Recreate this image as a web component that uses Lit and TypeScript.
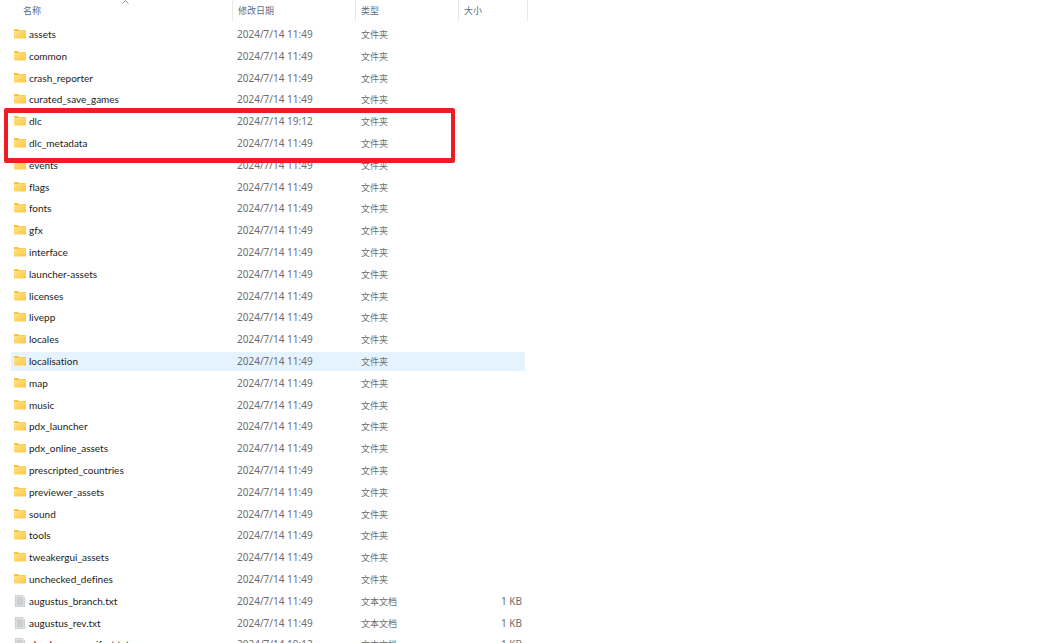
import { LitElement, html, css, svg } from "lit";
import { customElement, property, state } from "lit/decorators.js";

type Kind = "folder" | "text";

interface Entry {
  name: string;
  kind: Kind;
  modified: string;
  size?: string;
}

const DEFAULT_DATE = "2024/7/14 11:49";

const folder = (name: string, modified = DEFAULT_DATE): Entry => ({ name, kind: "folder", modified });
const text = (name: string, size: string, modified = DEFAULT_DATE): Entry => ({ name, kind: "text", modified, size });

const ENTRIES: Entry[] = [
  folder("assets"),
  folder("common"),
  folder("crash_reporter"),
  folder("curated_save_games"),
  folder("dlc", "2024/7/14 19:12"),
  folder("dlc_metadata"),
  folder("events"),
  folder("flags"),
  folder("fonts"),
  folder("gfx"),
  folder("interface"),
  folder("launcher-assets"),
  folder("licenses"),
  folder("livepp"),
  folder("locales"),
  folder("localisation"),
  folder("map"),
  folder("music"),
  folder("pdx_launcher"),
  folder("pdx_online_assets"),
  folder("prescripted_countries"),
  folder("previewer_assets"),
  folder("sound"),
  folder("tools"),
  folder("tweakergui_assets"),
  folder("unchecked_defines"),
  text("augustus_branch.txt", "1 KB"),
  text("augustus_rev.txt", "1 KB"),
  text("checksum_manifest.txt", "1 KB", "2024/7/14 19:12"),
];

const KIND_LABEL: Record<Kind, string> = { folder: "文件夹", text: "文本文档" };

@customElement("file-icon")
export class FileIcon extends LitElement {
  @property() kind: Kind = "folder";

  static styles = css`
    :host {
      display: block;
      width: 12px;
      height: 12px;
      flex: none;
    }
    .glyph {
      display: block;
      width: 12px;
      height: 12px;
    }
  `;

  render() {
    const shape =
      this.kind === "folder"
        ? svg`
            <defs>
              <linearGradient id="front" x1="0" y1="0" x2="1" y2="1">
                <stop offset="0" stop-color="#ffe28c"></stop>
                <stop offset="1" stop-color="#fcc840"></stop>
              </linearGradient>
            </defs>
            <path d="M0 1.7Q0 1 .7 1H3.8L4.8 2H11.3Q12 2 12 2.7V6H0Z" fill="#f9c22e"></path>
            <path d="M0 3.1H4L5 2.5H11.4Q12 2.5 12 3.1V9.8Q12 10.4 11.4 10.4H.6Q0 10.4 0 9.8Z" fill="url(#front)"></path>`
        : svg`
            <path d="M1.4.4H8.3L10.6 2.7V11.6H1.4Z" fill="#e9eaea" stroke="#bdbfc0" stroke-width=".7"></path>
            <path d="M2.6 1.8H7.6V3.3H9.5V10.6H2.6Z" fill="#cccecf"></path>
            <path d="M8.3.4V2.7H10.6" fill="#fff" stroke="#bdbfc0" stroke-width=".5"></path>`;
    return html`<svg class="glyph" viewBox="0 0 12 12" aria-hidden="true">${shape}</svg>`;
  }
}

@customElement("app-root")
export class AppRoot extends LitElement {
  @state() private hovered = "localisation";

  static styles = css`
    :host {
      display: block;
      height: 100vh;
      overflow: hidden;
      background: #fff;
      color: #6d6d6d;
      font-family: "Noto Sans", "Noto Sans CJK SC", sans-serif;
      font-size: 10px;
      font-variant-ligatures: none;
      line-height: 16px;
    }
    .pane {
      position: relative;
    }
    .files {
      table-layout: fixed;
      width: 528px;
      border-collapse: separate;
      border-spacing: 0;
    }
    .col-name {
      width: 233px;
    }
    .col-date {
      width: 123px;
    }
    .col-type {
      width: 103px;
    }
    .col-size {
      width: 69px;
    }
    .head {
      position: relative;
      height: 24px;
      padding: 0;
      vertical-align: top;
      text-align: left;
      font-weight: 400;
    }
    .sort {
      display: block;
      box-sizing: border-box;
      width: 100%;
      height: 21px;
      margin: 0;
      padding: 0 0 0 5px;
      border: 0;
      border-right: 1px solid #e8e8e8;
      background: none;
      color: #5a6d86;
      font: inherit;
      font-size: 9px;
      text-align: left;
    }
    .sort.first {
      padding-left: 23px;
    }
    .caret {
      position: absolute;
      top: 0;
      left: 122px;
      width: 7px;
      height: 4px;
    }
    .cell {
      box-sizing: border-box;
      height: 22px;
      padding: 0 0 2px 4px;
      border: 0 solid transparent;
      border-top-width: 1px;
      border-bottom-width: 2px;
      background-clip: padding-box;
      white-space: nowrap;
    }
    .row:nth-child(5n + 3) .cell {
      height: 21px;
      border-bottom-width: 1px;
    }
    .cell.name {
      border-left-width: 11px;
      padding-left: 3px;
      color: #1b1b1b;
      font-family: Lato, sans-serif;
    }
    .cell.kind {
      padding: 0 0 0 5px;
      font-size: 9px;
    }
    .cell.size {
      border-right-width: 3px;
      padding-right: 3px;
      text-align: right;
    }
    .row.hovered .cell {
      background-color: #e5f3ff;
    }
    .label {
      display: flex;
      align-items: center;
      gap: 3px;
    }
    .mark {
      position: absolute;
      top: 108px;
      left: 4px;
      width: 451px;
      height: 55px;
      box-sizing: border-box;
      border: 0 solid #ee1c25;
      border-width: 5px 4px;
      border-radius: 2px;
      pointer-events: none;
    }
  `;

  private row(entry: Entry) {
    return html`<tr
      class="row ${entry.name === this.hovered ? "hovered" : ""}"
      @mouseenter=${() => (this.hovered = entry.name)}
    >
      <td class="cell name">
        <div class="label"><file-icon .kind=${entry.kind}></file-icon><span>${entry.name}</span></div>
      </td>
      <td class="cell">${entry.modified}</td>
      <td class="cell kind">${KIND_LABEL[entry.kind]}</td>
      <td class="cell size">${entry.size ?? ""}</td>
    </tr>`;
  }

  render() {
    return html`<main class="pane">
      <table class="files">
        <colgroup>
          <col class="col-name" />
          <col class="col-date" />
          <col class="col-type" />
          <col class="col-size" />
        </colgroup>
        <thead>
          <tr>
            <th class="head" scope="col" aria-sort="ascending">
              <button class="sort first">名称</button>
              <svg class="caret" viewBox="0 0 7 4" aria-hidden="true">
                <path d="M.5 3.5L3.5.7L6.5 3.5" fill="none" stroke="#777" stroke-width=".8"></path>
              </svg>
            </th>
            <th class="head" scope="col"><button class="sort">修改日期</button></th>
            <th class="head" scope="col"><button class="sort">类型</button></th>
            <th class="head" scope="col"><button class="sort">大小</button></th>
          </tr>
        </thead>
        <tbody>
          ${ENTRIES.map((entry) => this.row(entry))}
        </tbody>
      </table>
      <div class="mark"></div>
    </main>`;
  }
}
